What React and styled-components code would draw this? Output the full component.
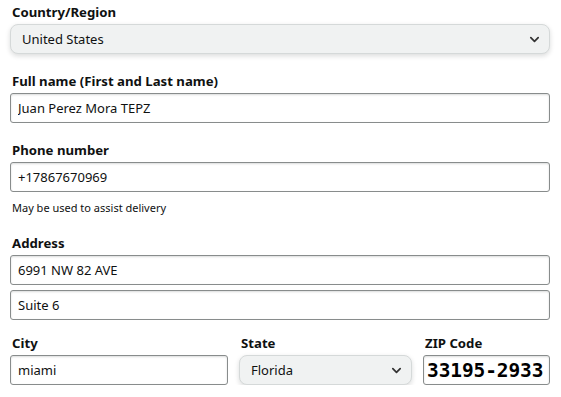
import React from 'react';
import styled, { createGlobalStyle } from 'styled-components';

const GlobalStyle = createGlobalStyle`
    body {
        margin: 0;
        background: #ffffff;
        font-family: "Noto Sans", "Liberation Sans", Arial, sans-serif;
        color: #0f1111;
    }
`;

const Form = styled.form`
    width: 540px;
    padding: 3px 0 0 10px;
    display: flex;
    flex-direction: column;
`;

const Group = styled.div`
    display: flex;
    flex-direction: column;
    margin-top: ${(p) => p.$top ?? 0}px;
    margin-bottom: ${(p) => p.$gap ?? 18}px;
`;

const Label = styled.label`
    font-size: 13.2px;
    font-weight: 700;
    line-height: 19px;
    height: 19px;
    padding-left: 2px;
    margin-bottom: 2px;
`;

const TextInput = styled.input`
    box-sizing: border-box;
    height: 30px;
    width: 100%;
    padding: 0 7px;
    border: 1px solid #888c8c;
    border-radius: 3px;
    box-shadow: 0 1px 2px rgba(15, 17, 17, 0.15) inset;
    font-family: inherit;
    font-size: 13px;
    color: #0f1111;
    background: #fff;
    outline: none;
    & + & {
        margin-top: 5px;
    }
`;

const ZipInput = styled(TextInput)`
    padding: 0 3px;
    font-family: "DejaVu Sans Mono", "Liberation Mono", monospace;
    font-weight: 700;
    font-size: 19.5px;
    color: #000;
    letter-spacing: -0.1px;
`;

const Hint = styled.div`
    font-size: 11px;
    line-height: 16px;
    margin-top: 8px;
    padding-left: 2px;
    color: #0f1111;
`;

const SelectBox = styled.div`
    box-sizing: border-box;
    height: 30px;
    display: flex;
    align-items: center;
    justify-content: space-between;
    padding: 0 9px 0 11px;
    background: #f0f2f2;
    border: 1px solid #d5d9d9;
    border-radius: 8px;
    box-shadow: 0 2px 5px rgba(15, 17, 17, 0.15);
    font-size: 13px;
    color: #0f1111;
`;

const Chevron = styled.svg`
    width: 11px;
    height: 11px;
    flex-shrink: 0;
`;

const Row = styled.div`
    display: grid;
    grid-template-columns: 218px 173px 1fr;
    column-gap: 11px;
`;

function Select({ value }) {
    return (
        <SelectBox>
            <span>{value}</span>
            <Chevron viewBox="0 0 12 12">
                <path d="M2 4 L6 8 L10 4" fill="none" stroke="#333" strokeWidth="1.9" strokeLinecap="round" strokeLinejoin="round" />
            </Chevron>
        </SelectBox>
    );
}

export default function App() {
    return (
        <>
            <GlobalStyle />
            <Form onSubmit={(e) => e.preventDefault()}>
                <Group>
                    <Label>Country/Region</Label>
                    <Select value="United States" />
                </Group>

                <Group>
                    <Label>Full name (First and Last name)</Label>
                    <TextInput defaultValue="Juan Perez Mora TEPZ" />
                </Group>

                <Group $gap={0}>
                    <Label>Phone number</Label>
                    <TextInput defaultValue="+17867670969" />
                    <Hint>May be used to assist delivery</Hint>
                </Group>

                <Group $top={18} $gap={14}>
                    <Label>Address</Label>
                    <TextInput defaultValue="6991 NW 82 AVE" />
                    <TextInput defaultValue="Suite 6" />
                </Group>

                <Row>
                    <Group $gap={0}>
                        <Label>City</Label>
                        <TextInput defaultValue="miami" />
                    </Group>
                    <Group $gap={0}>
                        <Label>State</Label>
                        <Select value="Florida" />
                    </Group>
                    <Group $gap={0}>
                        <Label>ZIP Code</Label>
                        <ZipInput defaultValue="33195-2933" />
                    </Group>
                </Row>
            </Form>
        </>
    );
}
